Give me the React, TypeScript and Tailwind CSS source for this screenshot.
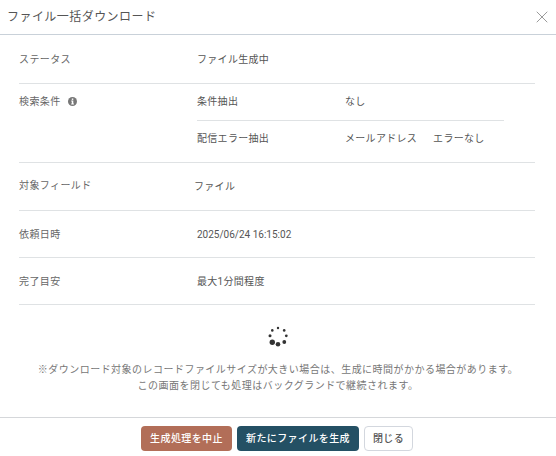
import { X } from "lucide-react";

const font = { fontFamily: 'Roboto, "Noto Sans CJK JP", sans-serif' };

const dots = [
  { x: 277, y: 328, r: 1.2 },
  { x: 283.2, y: 330.4, r: 1.3 },
  { x: 285.3, y: 335.8, r: 1.4 },
  { x: 283.3, y: 342, r: 1.9 },
  { x: 277, y: 344.3, r: 2.3 },
  { x: 271.3, y: 342.2, r: 2.7 },
  { x: 269, y: 335.8, r: 1.5 },
  { x: 271.3, y: 330.4, r: 1.3 },
];

const Spinner = () => (
  <svg width="24" height="24" viewBox="265 324 24 24" className="text-[#333]">
    {dots.map((dot) => (
      <circle key={dot.x + "-" + dot.y} cx={dot.x} cy={dot.y} r={dot.r} fill="currentColor" />
    ))}
  </svg>
);

const InfoIcon = () => (
  <svg width="9" height="9" viewBox="0 0 9 9">
    <circle cx="4.5" cy="4.5" r="4.5" fill="#777" />
    <rect x="3.8" y="1.5" width="1.5" height="1.4" fill="#fff" />
    <path d="M3.2 3.6h2.1v2.9h.6v1H3.2v-1h.6V4.6h-.6z" fill="#fff" />
  </svg>
);

const Row = ({
  label,
  value,
  className,
  valueClassName,
}: {
  label: string;
  value: string;
  className?: string;
  valueClassName?: string;
}) => (
  <div className={"flex items-center border-b border-[#dfe2e4] text-[10px] " + (className ?? "")}>
    <div className="w-[178px] tracking-[0.4px] text-[#666]">{label}</div>
    <div className={"text-[#555] " + (valueClassName ?? "tracking-[0.3px]")}>{value}</div>
  </div>
);

export default function App() {
  return (
    <div className="flex h-[456px] w-[556px] flex-col overflow-hidden bg-white" style={font}>
      <div className="flex h-[35px] shrink-0 items-center justify-between border-b border-[#c9d1d9] pl-[7px] pr-[4px]">
        <h1 className="text-xs font-normal tracking-[0.45px] text-[#555]">ファイル一括ダウンロード</h1>
        <X className="h-5 w-5 text-[#777]" strokeWidth={0.9} />
      </div>

      <div className="mx-[19px] mr-[21px] flex flex-col">
        <Row label="ステータス" value="ファイル生成中" className="h-[49px]" />

        <div className="flex h-[79px] border-b border-[#dfe2e4] text-[10px]">
          <div className="flex h-[35px] w-[178px] items-center gap-[7px] tracking-[0.4px] text-[#666]">
            検索条件
            <InfoIcon />
          </div>
          <div className="flex w-[307px] flex-col tracking-[0.3px] text-[#555]">
            <div className="flex h-[37px] items-center border-b border-[#dfe2e4] pb-[2px]">
              <div className="w-[148px]">条件抽出</div>
              <div>なし</div>
            </div>
            <div className="flex h-[37px] items-center pb-[3px]">
              <div className="w-[148px]">配信エラー抽出</div>
              <div className="flex gap-4">
                <span>メールアドレス</span>
                <span>エラーなし</span>
              </div>
            </div>
          </div>
        </div>

        <div className="flex h-[48px] items-center border-b border-[#dfe2e4] text-[10px]">
          <div className="w-[175px] -translate-y-px tracking-[0.4px] text-[#666]">対象フィールド</div>
          <div className="tracking-[0.3px] text-[#555]">ファイル</div>
        </div>
        <Row label="依頼日時" value="2025/06/24 16:15:02" className="h-[47px]" valueClassName="tracking-normal" />
        <Row label="完了目安" value="最大1分間程度" className="h-[47px]" />
      </div>

      <div className="flex flex-1 flex-col items-center border-b border-[#d5d7da] pt-[19px]">
        <Spinner />
        <p className="mt-[14px] text-center text-[10px] leading-[16px] tracking-[0.47px] text-[#777]">
          ※ダウンロード対象のレコードファイルサイズが大きい場合は、生成に時間がかかる場合があります。
          <br />
          この画面を閉じても処理はバックグランドで継続されます。
        </p>
      </div>

      <div className="flex h-[38px] shrink-0 items-start justify-center gap-[5px] pr-[2px] pt-[8px] text-[10px] font-medium tracking-[0.4px]">
        <button type="button" className="h-[25px] w-[91px] rounded-[4px] bg-[#b26e58] pb-px text-white">
          生成処理を中止
        </button>
        <button type="button" className="h-[25px] w-[122px] rounded-[4px] bg-[#245064] pb-px text-white">
          新たにファイルを生成
        </button>
        <button type="button" className="h-[25px] w-[49px] rounded-[4px] border border-[#d3d7de] bg-white pb-px text-[#555]">
          閉じる
        </button>
      </div>
    </div>
  );
}
